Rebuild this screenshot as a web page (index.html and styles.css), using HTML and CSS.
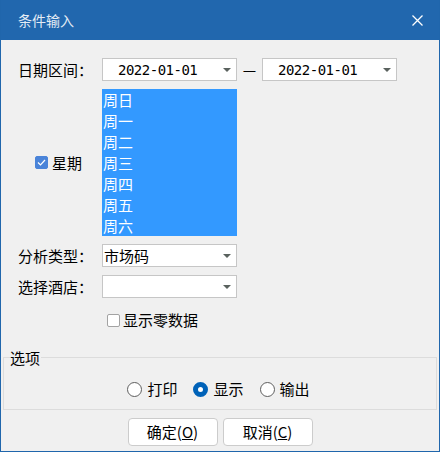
FILE: index.html
```html
<!DOCTYPE html>
<html lang="zh-CN">
<head>
<meta charset="utf-8">
<title>条件输入</title>
<link rel="stylesheet" href="styles.css">
</head>
<body>
<div class="window">
  <div class="titlebar">
    <span class="title">条件输入</span>
    <svg class="close" width="11" height="11" viewBox="0 0 11 11"><path d="M0.5 0.5L10.5 10.5M10.5 0.5L0.5 10.5" stroke="#fff" stroke-width="1.3" fill="none"/></svg>
  </div>
  <div class="form">
    <div class="label">日期区间：</div>
    <div class="daterow">
      <div class="combo date"><span>2022-01-01</span><i class="arrow"></i></div>
      <span class="dash">—</span>
      <div class="combo date"><span>2022-01-01</span><i class="arrow"></i></div>
    </div>

    <div class="weeklabel"><span class="check on"><svg width="9" height="7" viewBox="0 0 9 7"><path d="M1 3.5L3.5 6L8 1" stroke="#fff" stroke-width="1.2" fill="none"/></svg></span><span>星期</span></div>
    <div class="list">
      <div>周日</div><div>周一</div><div>周二</div><div>周三</div><div>周四</div><div>周五</div><div>周六</div>
    </div>

    <div class="label">分析类型：</div>
    <div class="combo plain"><span>市场码</span><i class="arrow"></i></div>

    <div class="label">选择酒店：</div>
    <div class="combo plain"><span></span><i class="arrow"></i></div>

    <div></div>
    <div class="zero"><span class="check"></span><span>显示零数据</span></div>
  </div>

  <fieldset class="group">
    <legend>选项</legend>
    <div class="radios">
      <label class="ritem"><span class="radio"></span><span>打印</span></label>
      <label class="ritem"><span class="radio on"></span><span>显示</span></label>
      <label class="ritem"><span class="radio"></span><span>输出</span></label>
    </div>
  </fieldset>

  <div class="buttons">
    <button class="btn">确定(<u>O</u>)</button>
    <button class="btn">取消(<u>C</u>)</button>
  </div>
</div>
</body>
</html>
```

FILE: styles.css
```css
html, body {
  margin: 0;
  padding: 0;
  background: #f0f0f0;
}
body {
  font-family: "Noto Sans CJK SC", "Noto Sans", sans-serif;
  font-size: 15px;
  color: #000;
}
.window {
  width: 440px;
  height: 452px;
  box-sizing: border-box;
  border: 1px solid #2066ac;
  border-top: 0;
  background: #f0f0f0;
  display: flex;
  flex-direction: column;
}
.titlebar {
  height: 40px;
  flex: none;
  background: #2167ae;
  color: #e4ecf5;
  font-size: 14px;
  display: flex;
  align-items: center;
  justify-content: space-between;
  padding: 0 16px 0 17px;
}
.title {
  line-height: 20px;
}
.close {
  display: block;
}
.form {
  display: grid;
  grid-template-columns: 84px auto;
  row-gap: 8px;
  align-items: center;
  padding: 18px 0 0 17px;
}
.label {
  line-height: 20px;
  white-space: nowrap;
}
.daterow {
  display: flex;
  align-items: center;
}
.dash {
  width: 25px;
  text-align: center;
  line-height: 20px;
}
.combo {
  width: 135px;
  height: 23px;
  box-sizing: border-box;
  border: 1px solid #c6c6c6;
  background: #fff;
  display: flex;
  align-items: center;
  justify-content: space-between;
  padding: 0 5px 0 1px;
  line-height: 20px;
}
.combo.date {
  padding-left: 15px;
  font-family: "DejaVu Sans Mono", "Liberation Mono", monospace;
  font-size: 14px;
  letter-spacing: -0.5px;
}
.arrow {
  display: block;
  width: 0;
  height: 0;
  border-left: 4px solid transparent;
  border-right: 4px solid transparent;
  border-top: 4px solid #5a625e;
}
.weeklabel {
  display: flex;
  align-items: center;
  justify-content: flex-end;
  padding-right: 20px;
  gap: 4px;
  line-height: 20px;
}
.check {
  width: 13px;
  height: 13px;
  box-sizing: border-box;
  border: 1px solid #a3a3a3;
  border-radius: 2px;
  background: #fff;
  display: flex;
  align-items: center;
  justify-content: center;
  flex: none;
}
.check.on {
  background: #4a84d9;
  border-color: #4a84d9;
}
.list {
  width: 135px;
  height: 147px;
  background: #3399ff;
  color: #fff;
  line-height: 21px;
  padding-left: 1px;
  box-sizing: border-box;
}
.zero {
  display: flex;
  align-items: center;
  gap: 3px;
  height: 20px;
  margin-top: 4px;
  padding-left: 5px;
  line-height: 20px;
}
.group {
  margin: 20px 2px 0 2px;
  border: 1px solid #dcdcdc;
  padding: 14px 0 10px 0;
  min-width: 0;
}
.group legend {
  margin-left: 6px;
  padding: 0 1px 0 0;
  line-height: 15px;
  height: 15px;
}
.radios {
  display: flex;
  justify-content: center;
  gap: 16px;
  height: 20px;
  padding-right: 3px;
}
.ritem {
  display: flex;
  align-items: center;
  gap: 5px;
  line-height: 20px;
}
.radio {
  width: 15px;
  height: 15px;
  box-sizing: border-box;
  border-radius: 50%;
  border: 1px solid #5e5e5e;
  background: #fff;
  flex: none;
}
.radio.on {
  border: 5px solid #0062b8;
}
.buttons {
  display: flex;
  justify-content: center;
  gap: 5px;
  margin-top: 8px;
}
.btn {
  width: 90px;
  height: 28px;
  box-sizing: border-box;
  background: #fff;
  border: 1px solid #cccccc;
  border-radius: 4px;
  font-family: "Noto Sans CJK SC", "Noto Sans", sans-serif;
  font-size: 15px;
  color: #000;
  padding: 0;
  line-height: 20px;
}
.btn u {
  text-decoration: underline;
}
```
